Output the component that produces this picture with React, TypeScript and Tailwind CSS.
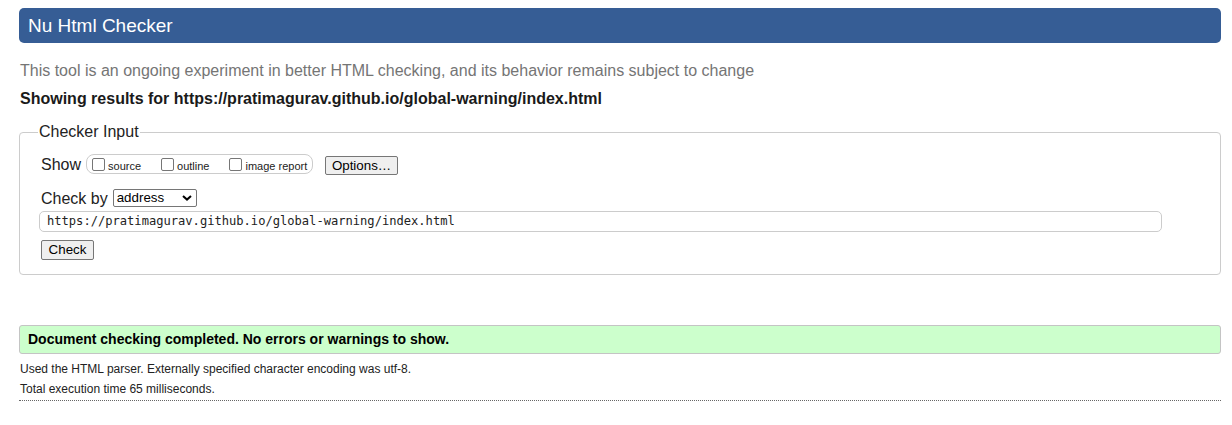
const CheckOpt = ({ label }: { label: string }) => (
  <label className="flex items-start">
    <span className="mt-[3px] block h-[13px] w-[13px] rounded-[2px] border border-[#767676] bg-white" />
    <span className="ml-[3px] mt-[5px] text-[11px] leading-[13px] text-[#222]">{label}</span>
  </label>
);

const App = () => {
  return (
    <div className="min-h-[425px] bg-white font-['Liberation_Sans',Arial,sans-serif] text-[#222]">
      <div className="ml-[19px] mr-[11px] pt-[8px]">
        <h1 className="flex h-[35px] items-center rounded-[5px] bg-[#365d95] pb-[1px] pl-[9px] text-[19px] text-white">
          <span className="mt-[2px]">Nu Html Checker</span>
        </h1>

        <p className="mt-[19px] pl-[1px] text-[16px] leading-[18px] text-[#757575]">
          This tool is an ongoing experiment in better HTML checking, and its behavior remains subject to change
        </p>
        <p className="mt-[10px] pl-[1px] text-[16px] font-bold leading-[18px] text-[#1a1a1a]">
          Showing results for https://pratimagurav.github.io/global-warning/index.html
        </p>

        <fieldset className="mt-[15px] rounded-[4px] border border-[#cccccc] pb-[14px]">
          <legend className="ml-[18px] px-[1px] text-[16px] leading-[18px]">Checker Input</legend>

          <div className="pl-[19px]">
            <div className="ml-[2px] mt-[8px] flex items-start">
              <span className="mt-[7px] text-[16px] leading-[18px]">Show</span>
              <div className="ml-[5px] mt-[5px] flex h-[20px] w-[227px] items-start gap-[20px] rounded-[8px] border border-[#cccccc] pl-[5px]">
                <CheckOpt label="source" />
                <CheckOpt label="outline" />
                <CheckOpt label="image report" />
              </div>
              <button
                type="button"
                className="ml-[12px] mt-[7px] flex h-[19px] w-[73px] items-center justify-center rounded-[2px] border border-[#767676] bg-[#efefef] text-[13.33px] text-black"
              >
                Options…
              </button>
            </div>

            <div className="ml-[2px] mt-[14px] flex items-start">
              <span className="mt-[1px] text-[16px] leading-[18px]">Check by</span>
              <div className="ml-[5px] flex h-[18px] w-[84px] items-center justify-between rounded-[2px] border border-[#767676] bg-white pl-[3px] pr-[4px] text-[13.33px] text-black">
                <span>address</span>
                <svg width="10" height="6" viewBox="0 0 10 6" fill="none">
                  <path d="M1 1l4 3.6L9 1" stroke="#000" strokeWidth="2" />
                </svg>
              </div>
            </div>

            <div className="mt-[3px] flex h-[21px] w-[1123px] items-center rounded-[5px] border border-[#cccccc] pl-[7px] font-['DejaVu_Sans_Mono',monospace] text-[12.1px] text-[#222]">
              https://pratimagurav.github.io/global-warning/index.html
            </div>

            <button
              type="button"
              className="ml-[2px] mt-[8px] flex h-[20px] w-[53px] items-center justify-center rounded-[2px] border border-[#767676] bg-[#efefef] text-[13.33px] text-black"
            >
              Check
            </button>
          </div>
        </fieldset>

        <div className="mt-[50px] flex h-[29px] items-center rounded-[3px] border border-[#c4c4c4] bg-[#ccffcc] pl-[8px] text-[14px] font-bold text-black">
          Document checking completed. No errors or warnings to show.
        </div>

        <p className="mt-[8px] pl-[1px] text-[12px] leading-[14px] text-[#222]">
          Used the HTML parser. Externally specified character encoding was utf-8.
        </p>
        <p className="mt-[6px] pl-[1px] text-[12px] leading-[14px] text-[#222]">
          Total execution time 65 milliseconds.
        </p>
        <div className="mt-[4px] border-t border-dotted border-[#666666]" />
      </div>
    </div>
  );
};

export default App;
